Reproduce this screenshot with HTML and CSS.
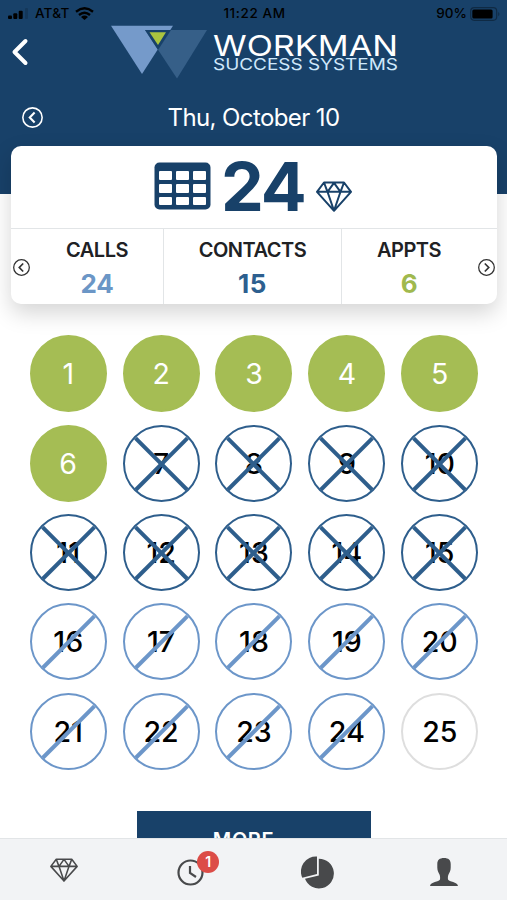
FILE: index.html
```html
<!DOCTYPE html>
<html lang="en">
<head>
<meta charset="utf-8">
<title>Workman Success Systems</title>
<link rel="stylesheet" href="styles.css">
</head>
<body>
<svg class="defs" aria-hidden="true">
  <symbol id="gem" viewBox="0 0 36 31"><g fill="none" stroke="currentColor" stroke-width="2" stroke-linejoin="round"><path d="M8 1.5H28L35 10.8L18 29.8L1 10.8ZM1 10.8H35M8 1.5L11.5 10.8L18 29.8L24.5 10.8L28 1.5M11.5 10.8L18 1.8L24.5 10.8"/></g></symbol>
  <symbol id="circle-left" viewBox="0 0 20 20"><g fill="none" stroke="currentColor"><circle cx="10" cy="10" r="9.2" stroke-width="1.5"/><path d="M12 5.3L7.4 10L12 14.7" stroke-width="2"/></g></symbol>
</svg>
<div class="app">
  <header class="header">
    <div class="status">
      <div class="carrier">
        <svg width="20" height="11" viewBox="0 0 20 11"><rect y="7.5" width="4" height="3.5" rx="1"/><rect x="5.3" y="5.3" width="4" height="5.7" rx="1"/><rect x="10.7" y="2.7" width="4" height="8.3" rx="1"/><rect x="17" width="3" height="11" rx="1" opacity=".15"/></svg>
        <span class="network">AT&amp;T</span>
        <svg width="19" height="13" viewBox="0 0 19 13"><g fill="none" stroke="#000" stroke-width="2.4"><path d="M1 4.7Q9.5-2 18 4.7M4 8Q9.5 3.4 15 8"/></g><path d="M6 9.9Q9.5 7.3 13 9.9L9.5 13Z"/></svg>
      </div>
      <span class="time">11:22 AM</span>
      <div class="battery"><span>90%</span><svg width="31" height="14" viewBox="0 0 31 14"><rect x=".7" y=".7" width="26" height="12.6" rx="3.5" fill="none" stroke="#000" stroke-opacity=".35" stroke-width="1.2"/><rect x="2.3" y="2.5" width="20.3" height="9" rx="1.5"/><path d="M28.3 4.7Q30.5 7 28.3 9.3Z" opacity=".4"/></svg></div>
    </div>
    <div class="brand">
      <svg class="back" width="18" height="28" viewBox="0 0 18 28"><path d="M14.5 3L3.5 14L14.5 25" fill="none" stroke="#fff" stroke-width="4" stroke-linecap="round" stroke-linejoin="round"/></svg>
      <svg class="logo" width="290" height="56" viewBox="0 0 290 56" role="img" aria-label="Workman Success Systems">
        <path d="M0 .8H62L31 49Z" fill="#759aca"/>
        <path d="M34 5H96L66 53.5Z" fill="#365f88"/>
        <path d="M34 5H60L47 25Z" fill="#184169"/>
        <path d="M38.5 7.3H55L47 20Z" fill="#aac43f"/>
        <text class="logo-main" x="102" y="31" textLength="185" lengthAdjust="spacingAndGlyphs">WORKMAN</text>
        <text class="logo-sub" x="102" y="45.3" textLength="185" lengthAdjust="spacingAndGlyphs">SUCCESS SYSTEMS</text>
      </svg>
    </div>
    <div class="day">
      <svg class="day-prev" width="21" height="21"><use href="#circle-left"/></svg>
      <span class="date">Thu, October 10</span>
    </div>
  </header>
  <section class="card">
    <div class="total">
      <svg class="table-icon" width="57" height="48" viewBox="0 0 57 48"><rect x=".5" y=".5" width="56" height="47" rx="5" fill="#184169"/><g fill="#fff"><rect x="5" y="9" width="13" height="9" rx="1"/><rect x="22" y="9" width="13" height="9" rx="1"/><rect x="39" y="9" width="13" height="9" rx="1"/><rect x="5" y="22" width="13" height="9" rx="1"/><rect x="22" y="22" width="13" height="9" rx="1"/><rect x="39" y="22" width="13" height="9" rx="1"/><rect x="5" y="35" width="13" height="8" rx="1"/><rect x="22" y="35" width="13" height="8" rx="1"/><rect x="39" y="35" width="13" height="8" rx="1"/></g></svg>
      <span class="total-value">24</span>
      <svg class="total-gem" width="36" height="31"><use href="#gem"/></svg>
    </div>
    <div class="stats">
      <div class="stat calls"><svg class="arrow" width="17" height="17"><use href="#circle-left"/></svg><div class="label">CALLS</div><div class="value">24</div></div>
      <div class="stat contacts"><div class="label">CONTACTS</div><div class="value">15</div></div>
      <div class="stat appts"><div class="label">APPTS</div><div class="value">6</div><svg class="arrow next" width="17" height="17"><use href="#circle-left"/></svg></div>
    </div>
  </section>
  <main class="content">
    <div class="bubbles">
      <div class="bubble appt">1</div><div class="bubble appt">2</div><div class="bubble appt">3</div><div class="bubble appt">4</div><div class="bubble appt">5</div>
      <div class="bubble appt">6</div><div class="bubble contact">7</div><div class="bubble contact">8</div><div class="bubble contact">9</div><div class="bubble contact">10</div>
      <div class="bubble contact">11</div><div class="bubble contact">12</div><div class="bubble contact">13</div><div class="bubble contact">14</div><div class="bubble contact">15</div>
      <div class="bubble call">16</div><div class="bubble call">17</div><div class="bubble call">18</div><div class="bubble call">19</div><div class="bubble call">20</div>
      <div class="bubble call">21</div><div class="bubble call">22</div><div class="bubble call">23</div><div class="bubble call">24</div><div class="bubble">25</div>
    </div>
    <div class="more">MORE...</div>
  </main>
  <nav class="tabs">
    <div class="tab"><svg class="tab-gem" width="28" height="24"><use href="#gem"/></svg></div>
    <div class="tab"><div class="clock"><svg width="27" height="27" viewBox="0 0 27 27"><g fill="none" stroke="currentColor" stroke-width="2.2"><circle cx="13.5" cy="13.5" r="12"/><path d="M13 7V14L19 18"/></g></svg><span class="badge">1</span></div></div>
    <div class="tab"><svg class="pie" width="33" height="33" viewBox="0 0 33 33"><path d="M16 .5V18L1.3 21.8A15 15 0 0 1 16 .5Z"/><path d="M17.8 2.7A14.9 14.9 0 1 1 4 22.8L17.8 19.4Z"/></svg></div>
    <div class="tab"><svg class="person" width="28" height="28" viewBox="0 0 28 28"><path d="M14 0C18.5 0 20.7 2 20.7 6V9.5C20.7 13 19.5 14.5 18.5 16.5C17.8 18 17.8 20 18 21.5C19 24 27.5 23.5 28 28H0C.5 23.5 9 24 10 21.5C10.2 20 10.2 18 9.5 16.5C8.5 14.5 7.3 13 7.3 9.5V6C7.3 2 9.5 0 14 0Z"/></svg></div>
  </nav>
</div>
</body>
</html>
```
FILE: styles.css
```css
* { box-sizing: border-box; }
body { margin: 0; background: #fff; font-family: Inter, "Liberation Sans", sans-serif; color: #000; }
svg { display: block; flex: none; }
.defs { position: absolute; width: 0; height: 0; }
.app { width: 507px; height: 900px; overflow: hidden; display: flex; flex-direction: column; }

.header { height: 194px; flex: none; background: #184169; }
.status { height: 25px; display: grid; grid-template-columns: 1fr auto 1fr; align-items: center; padding: 2px 6px 0 8px; font-size: 13.5px; font-weight: 500; line-height: 1; }
.carrier { display: flex; align-items: center; }
.network { margin: 0 6px 0 7px; letter-spacing: .2px; }
.time { font-weight: 500; letter-spacing: .6px; }
.battery { display: flex; align-items: center; justify-content: flex-end; gap: 3px; }
.brand { height: 60px; display: flex; align-items: flex-start; padding-left: 11px; }
.back { margin-top: 13px; }
.logo { margin-left: 82px; }
.logo-main { font-size: 29px; font-weight: 400; fill: #fff; }
.logo-sub { font-size: 16px; font-weight: 400; fill: #cfe8fb; }
.day { height: 64px; display: grid; grid-template-columns: 1fr auto 1fr; align-items: center; color: #fff; }
.day-prev { margin-left: 22px; }
.date { font-size: 24px; letter-spacing: -.6px; }

.card { position: relative; z-index: 0; flex: none; width: 486px; height: 158px; margin: -48px 0 0 11px; background: #fff; border-radius: 10px; box-shadow: 0 9px 22px rgba(0, 0, 0, .17); display: flex; flex-direction: column; }
.total { height: 82px; display: flex; align-items: center; padding-left: 143px; color: #184169; }
.table-icon { margin-top: -3px; }
.total-value { margin: -2px 0 0 10px; width: 84px; font-size: 68px; line-height: 82px; font-weight: 700; letter-spacing: -2px; }
.total-gem { margin: 18px 0 0 11px; }
.stats { flex: 1; display: grid; grid-template-columns: 152px 178px 156px; border-top: 1px solid #e2e5e7; }
.stat { position: relative; text-align: center; padding-top: 9px; }
.stat + .stat { border-left: 1px solid #e2e5e7; }
.calls { padding-left: 20px; }
.appts { padding-right: 21px; }
.label { font-size: 20px; line-height: 24px; font-weight: 600; letter-spacing: -.5px; color: #202124; }
.value { margin-top: 6px; font-size: 26px; line-height: 32px; font-weight: 700; letter-spacing: -.3px; }
.calls .value { color: #6b96c6; }
.contacts .value { color: #2d5f8f; letter-spacing: .5px; }
.appts .value { color: #a0b94e; }
.arrow { position: absolute; left: 2px; top: 30px; color: #333; }
.arrow.next { left: auto; right: 2px; transform: scaleX(-1); }

.content { flex: 1; min-height: 0; overflow: hidden; padding-top: 31.4px; }
.bubbles { display: grid; grid-template-columns: repeat(5, 77px); gap: 12.3px 15.9px; margin-left: 29.7px; }
.bubble { position: relative; height: 77px; border: 2px solid #dedede; border-radius: 50%; display: flex; align-items: center; justify-content: center; font-size: 28.5px; font-weight: 500; letter-spacing: 0; font-kerning: none; }
.appt { background: #a5bd54; border-color: #a5bd54; color: #fff; font-weight: 400; }
.contact { border-color: #2e5e8c; }
.call { border-color: #6c96c9; }
.contact::before, .contact::after, .call::before { content: ""; position: absolute; left: 0; top: 35px; width: 73px; height: 3.5px; background: #2e5e8c; transform: rotate(-45deg); }
.contact::after { transform: rotate(45deg); }
.call::before { background: #6c96c9; }
.more { width: 234px; height: 58px; margin: 41.4px 0 0 137px; background: #184169; color: #fff; text-align: center; font-size: 20px; line-height: 58px; font-weight: 600; letter-spacing: .6px; }

.tabs { height: 62px; flex: none; display: grid; grid-template-columns: repeat(4, 1fr); background: #f2f3f5; border-top: 1px solid #e2e5e7; color: #48494b; }
.tab { display: flex; justify-content: center; align-items: center; padding: 5px 0 0 1px; }
.tab svg { fill: currentColor; }
.tab-gem { margin-bottom: 4px; }
.clock { position: relative; }
.badge { position: absolute; left: 20px; top: -8px; width: 22px; height: 22px; border-radius: 50%; background: #dc4c47; color: #fff; font-size: 14px; line-height: 22px; font-weight: 600; text-align: center; }
```
